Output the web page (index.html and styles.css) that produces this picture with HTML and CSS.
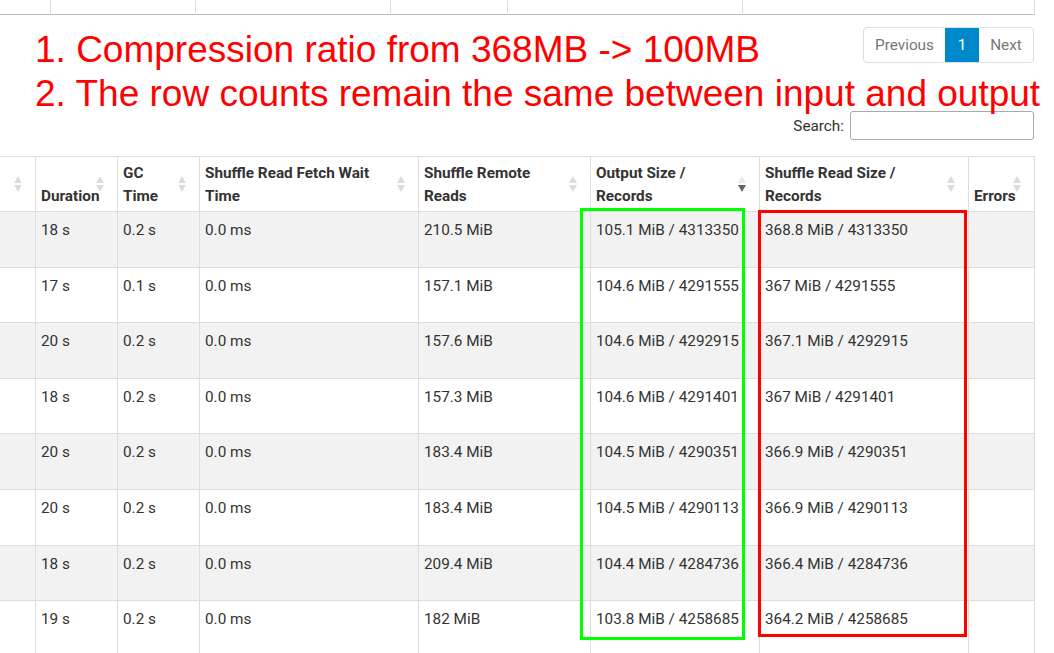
FILE: index.html
```html
<!DOCTYPE html>
<html>
<head>
<meta charset="utf-8">
<link rel="stylesheet" href="styles.css">
</head>
<body>
<div class="page">
  <table class="prev-table">
    <colgroup><col class="p1"><col class="p2"><col class="p3"><col class="p4"><col class="p5"><col class="p6"></colgroup>
    <tr><td></td><td></td><td></td><td></td><td></td><td></td></tr>
  </table>

  <div class="paging-row">
    <div class="pagination">
      <span class="pg">Previous</span><span class="pg active">1</span><span class="pg">Next</span>
    </div>
  </div>

  <div class="search-row">
    <label class="search-label" for="q">Search:</label>
    <input class="search-input" id="q" type="search">
  </div>

  <table class="tasks">
    <colgroup>
      <col class="c0"><col class="c1"><col class="c2"><col class="c3"><col class="c4"><col class="c5"><col class="c6"><col class="c7">
    </colgroup>
    <thead>
      <tr>
        <th><span class="sort"></span></th>
        <th>Duration<span class="sort"></span></th>
        <th>GC Time<span class="sort"></span></th>
        <th>Shuffle Read Fetch Wait Time<span class="sort"></span></th>
        <th>Shuffle Remote Reads<span class="sort"></span></th>
        <th>Output Size / Records<span class="sort desc"></span></th>
        <th>Shuffle Read Size / Records<span class="sort"></span></th>
        <th>Errors<span class="sort"></span></th>
      </tr>
    </thead>
    <tbody>
      <tr><td></td><td>18 s</td><td>0.2 s</td><td>0.0 ms</td><td>210.5 MiB</td><td>105.1 MiB / 4313350</td><td>368.8 MiB / 4313350</td><td></td></tr>
      <tr><td></td><td>17 s</td><td>0.1 s</td><td>0.0 ms</td><td>157.1 MiB</td><td>104.6 MiB / 4291555</td><td>367 MiB / 4291555</td><td></td></tr>
      <tr><td></td><td>20 s</td><td>0.2 s</td><td>0.0 ms</td><td>157.6 MiB</td><td>104.6 MiB / 4292915</td><td>367.1 MiB / 4292915</td><td></td></tr>
      <tr><td></td><td>18 s</td><td>0.2 s</td><td>0.0 ms</td><td>157.3 MiB</td><td>104.6 MiB / 4291401</td><td>367 MiB / 4291401</td><td></td></tr>
      <tr><td></td><td>20 s</td><td>0.2 s</td><td>0.0 ms</td><td>183.4 MiB</td><td>104.5 MiB / 4290351</td><td>366.9 MiB / 4290351</td><td></td></tr>
      <tr><td></td><td>20 s</td><td>0.2 s</td><td>0.0 ms</td><td>183.4 MiB</td><td>104.5 MiB / 4290113</td><td>366.9 MiB / 4290113</td><td></td></tr>
      <tr><td></td><td>18 s</td><td>0.2 s</td><td>0.0 ms</td><td>209.4 MiB</td><td>104.4 MiB / 4284736</td><td>366.4 MiB / 4284736</td><td></td></tr>
      <tr><td></td><td>19 s</td><td>0.2 s</td><td>0.0 ms</td><td>182 MiB</td><td>103.8 MiB / 4258685</td><td>364.2 MiB / 4258685</td><td></td></tr>
    </tbody>
  </table>

  <div class="note">
    <div>1. Compression ratio from 368MB -&gt; 100MB</div>
    <div>2. The row counts remain the same between input and output</div>
  </div>
  <div class="mark mark-green"></div>
  <div class="mark mark-red"></div>
</div>
</body>
</html>
```
FILE: styles.css
```css
html, body {
  margin: 0;
  padding: 0;
  overflow: hidden;
  background: #fff;
}
.page {
  position: relative;
  box-sizing: border-box;
  width: 1054px;
  height: 653px;
  padding-right: 20px;
  overflow: hidden;
  font-family: Roboto, "Liberation Sans", sans-serif;
  font-size: 15.3px;
  color: #333;
}
.prev-table {
  border-collapse: collapse;
  table-layout: fixed;
  width: 1034px;
  border-bottom: 1px solid #bbb;
}
.prev-table td {
  height: 14px;
  padding: 0;
  border-right: 1px solid #ddd;
}
.p1 { width: 50px; }
.p2 { width: 145px; }
.p3 { width: 195px; }
.p4 { width: 117px; }
.p5 { width: 235px; }
.p6 { width: 292px; }

.paging-row {
  display: flex;
  justify-content: flex-end;
  margin-top: 12px;
}
.pagination {
  display: flex;
  border: 1px solid #ddd;
  border-radius: 4px;
  overflow: hidden;
  height: 34px;
}
.pg {
  display: flex;
  align-items: center;
  justify-content: center;
  color: #777;
  padding: 0 12px;
  line-height: 34px;
}
.pg:first-child { width: 57px; }
.pg.active {
  background: #0088cc;
  color: #fff;
  width: 10px;
}
.pg.active + .pg { width: 30px; }

.search-row {
  display: flex;
  justify-content: flex-end;
  align-items: center;
  gap: 6px;
  margin-top: 48px;
}
.search-label { color: #333; }
.search-input {
  width: 180px;
  height: 25px;
  margin: 0;
  padding: 1px;
  border: 1px solid #aaa;
  border-radius: 3px;
  background: #fff;
  box-sizing: content-box;
}

.tasks {
  border-collapse: collapse;
  table-layout: fixed;
  width: 1035px;
  margin-left: -1px;
  margin-top: 16px;
  line-height: 22px;
}
.c0 { width: 36px; }
.c1 { width: 82px; }
.c2 { width: 82px; }
.c3 { width: 219px; }
.c4 { width: 172px; }
.c5 { width: 169px; }
.c6 { width: 209px; }
.c7 { width: 66px; }

.tasks th, .tasks td {
  border: 1px solid #ddd;
  text-align: left;
}
.tasks th {
  position: relative;
  height: 55px;
  box-sizing: border-box;
  padding: 4px 25px 3px 5px;
  vertical-align: bottom;
  font-weight: bold;
  line-height: 23px;
}
.tasks td {
  height: 55.6px;
  box-sizing: border-box;
  padding: 7px 5px;
  vertical-align: top;
}
.tasks tbody tr:nth-child(odd) td { background: #f2f2f2; }

.sort {
  position: absolute;
  right: 13px;
  top: 50%;
  width: 8px;
  height: 16px;
  margin-top: -8px;
}
.sort::before, .sort::after {
  content: "";
  position: absolute;
  left: 0;
  border-left: 4px solid transparent;
  border-right: 4px solid transparent;
}
.sort::before {
  top: 0;
  border-bottom: 7px solid #dcdcdc;
}
.sort::after {
  bottom: 0;
  border-top: 7px solid #dcdcdc;
}
.sort.desc::before { border-bottom-color: #eaeaea; }
.sort.desc::after { border-top-color: #666; }

.note {
  position: absolute;
  left: 35px;
  top: 28px;
  font-family: "Liberation Sans", Arial, sans-serif;
  font-size: 37px;
  line-height: 44px;
  color: #ff0000;
  white-space: nowrap;
}
.mark {
  position: absolute;
  box-sizing: border-box;
  border: 3px solid;
}
.mark-green {
  left: 580px;
  top: 208px;
  width: 165px;
  height: 432px;
  border-color: #00ff00;
}
.mark-red {
  left: 758px;
  top: 210px;
  width: 209px;
  height: 427px;
  border-color: #ff0000;
}
```
